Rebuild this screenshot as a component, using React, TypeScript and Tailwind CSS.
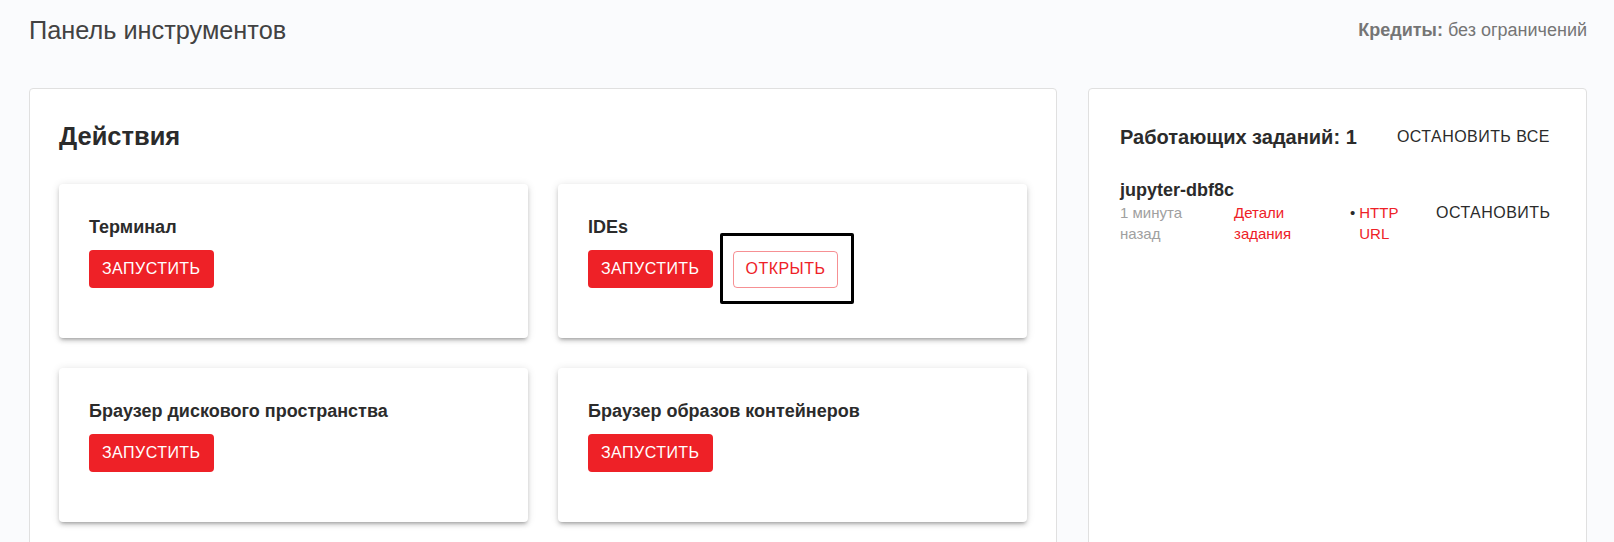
const font = { fontFamily: '"Liberation Sans", Arial, sans-serif' }

function ActionCard({ title, children }: { title: string; children: React.ReactNode }) {
  return (
    <div className="h-[154px] rounded-[4px] bg-white px-[30px] pt-[30px] shadow-[0_3px_3px_-2px_rgba(0,0,0,0.2),0_3px_4px_0_rgba(0,0,0,0.14),0_1px_8px_0_rgba(0,0,0,0.12)]">
      <div className="mb-[9px] text-[18px] font-bold leading-[27px] text-[#2b2b2b]">{title}</div>
      <div className="flex items-center gap-[20px]">{children}</div>
    </div>
  )
}

function LaunchButton() {
  return (
    <button className="h-[38px] rounded-[4px] bg-[#ee2127] px-[13px] text-[16px] uppercase leading-[28px] tracking-[0.46px] text-white">
      Запустить
    </button>
  )
}

export default function App() {
  return (
    <div style={font} className="min-h-screen bg-[#fafbfd] pl-[29px] pr-[27px] pt-[14px]">
      {/* Header */}
      <div className="mb-[42px] flex h-[32px] items-center justify-between">
        <h1 className="text-[25.3px] leading-[32px] text-[#424242]">Панель инструментов</h1>
        <div className="text-[18px] text-[#757575]">
          <span className="font-bold">Кредиты:</span> без ограничений
        </div>
      </div>

      <div className="flex items-stretch gap-[31px]">
        {/* Actions */}
        <div className="w-[1028px] shrink-0 rounded-[4px] border border-[#e0e0e0] bg-white p-[29px]">
          <h2 className="mb-[30px] text-[25.5px] font-bold leading-[36px] text-[#2b2b2b]">Действия</h2>
          <div className="grid grid-cols-2 gap-[30px]">
            <ActionCard title="Терминал">
              <LaunchButton />
            </ActionCard>
            <ActionCard title="IDEs">
              <LaunchButton />
              <div className="relative">
                <button className="h-[37px] rounded-[4px] border border-[#ee2127]/50 px-[12px] text-[16px] uppercase leading-[28px] tracking-[0.46px] text-[#ee2127]">
                  Открыть
                </button>
                {/* highlight box */}
                <div className="pointer-events-none absolute -bottom-[16px] -left-[13px] -right-[16px] -top-[18px] rounded-[2px] border-[3px] border-black" />
              </div>
            </ActionCard>
            <ActionCard title="Браузер дискового пространства">
              <LaunchButton />
            </ActionCard>
            <ActionCard title="Браузер образов контейнеров">
              <LaunchButton />
            </ActionCard>
          </div>
        </div>

        {/* Running jobs */}
        <div className="w-[499px] shrink-0 rounded-[4px] border border-[#e0e0e0] bg-white pb-[30px] pl-[31px] pr-[28px] pt-[30px]">
          <div className="flex h-[36px] items-center justify-between">
            <h3 className="text-[20px] font-bold leading-[28px] text-[#2b2b2b]">Работающих заданий: 1</h3>
            <button className="px-[8px] text-[16px] uppercase leading-[36px] tracking-[0.46px] text-[#2b2b2b]">
              Остановить все
            </button>
          </div>

          <div className="mt-[23px]">
            <div className="text-[18px] font-bold leading-[24px] text-[#2b2b2b]">jupyter-dbf8c</div>
            <div className="grid grid-cols-[114px_116px_78px_1fr] text-[15px] leading-[21px]">
              <div className="w-[90px] text-[#a0a0a0]">1 минута назад</div>
              <div className="w-[90px] text-[#ee2127]">Детали задания</div>
              <div className="flex gap-[4px]">
                <span className="text-[#2b2b2b]">•</span>
                <span className="text-[#ee2127]">HTTP URL</span>
              </div>
              <div>
                <button className="px-[8px] text-[16px] uppercase leading-[21px] tracking-[0.46px] text-[#2b2b2b]">
                  Остановить
                </button>
              </div>
            </div>
          </div>
        </div>
      </div>
    </div>
  )
}
